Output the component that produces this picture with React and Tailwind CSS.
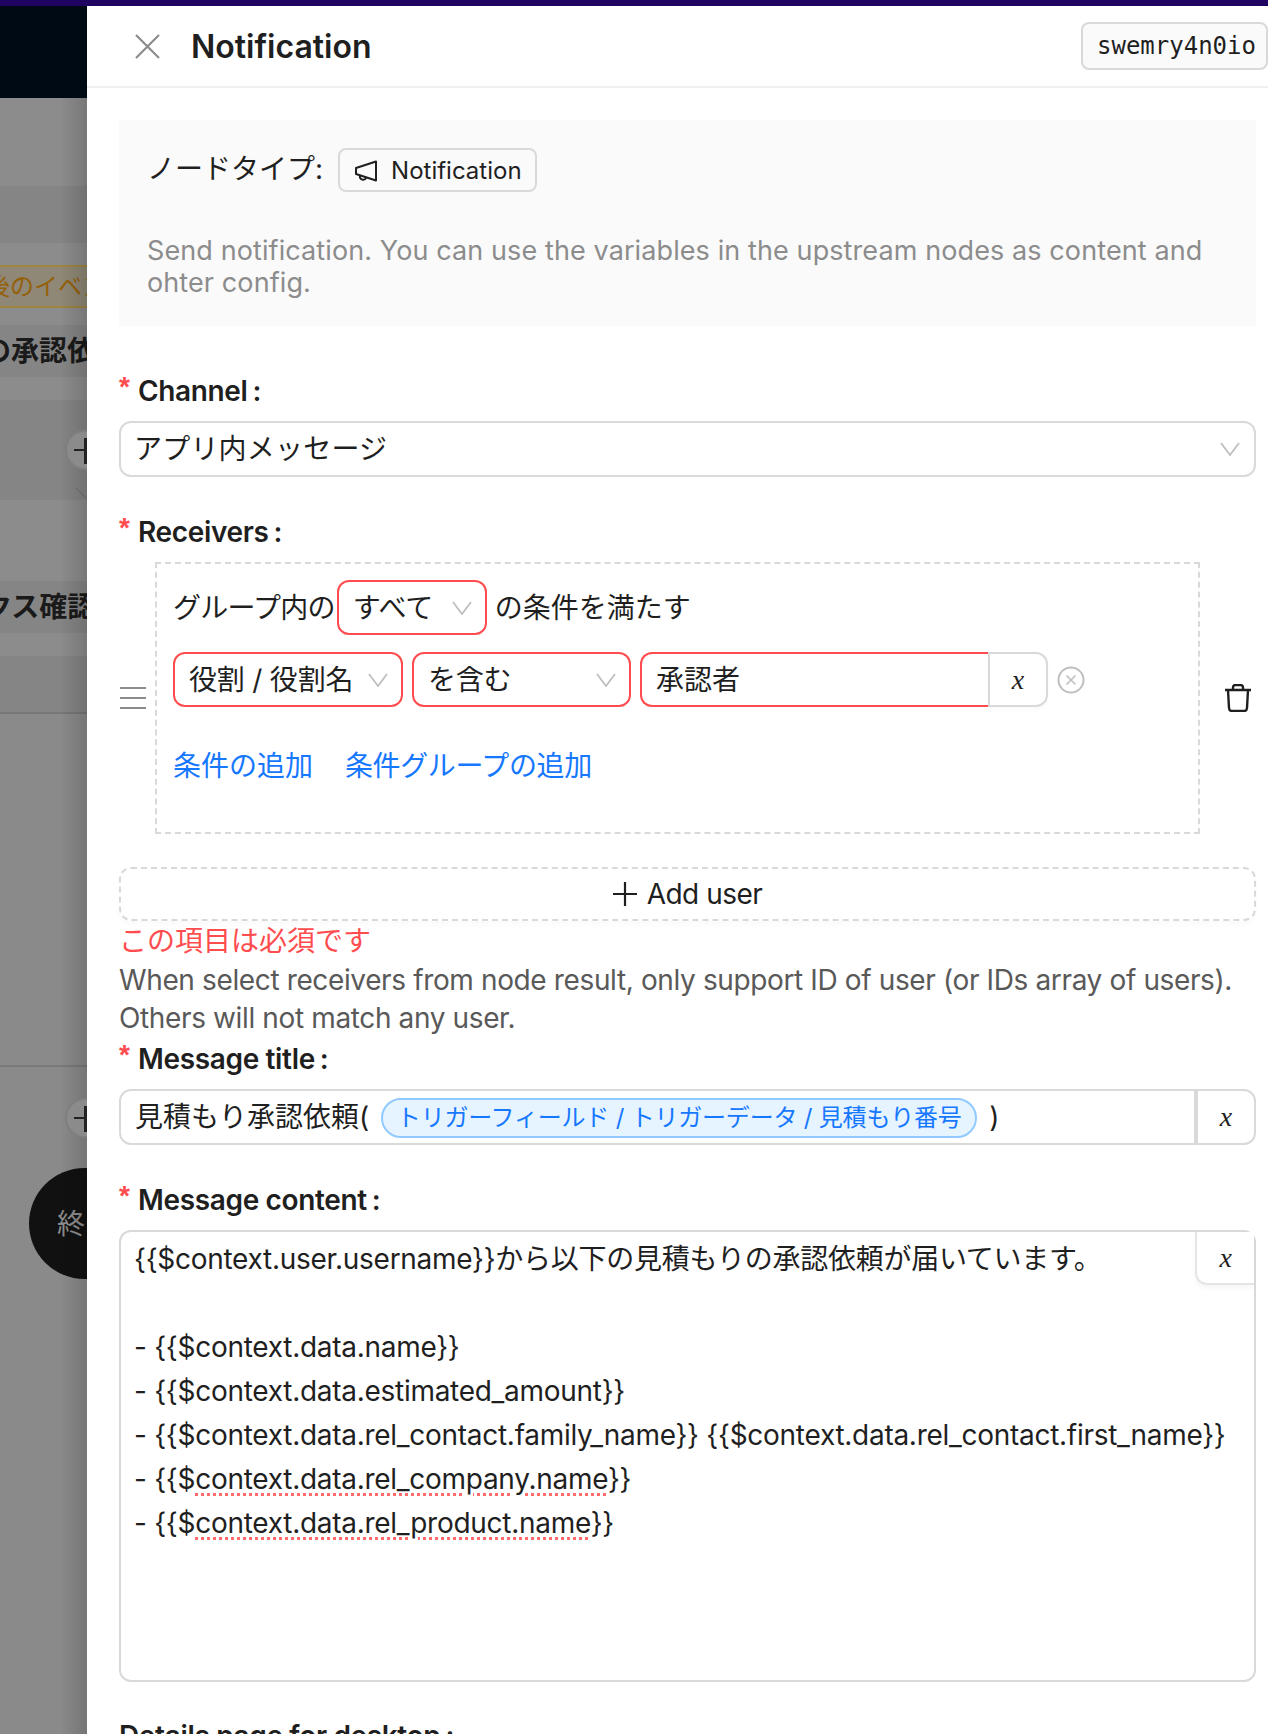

const Chevron = ({ className = "" }) => (
  <svg width="20" height="14" viewBox="0 0 20 14" fill="none" className={`shrink-0 ${className}`}>
    <path d="M1 1 L10 13 L19 1" stroke="#bfbfbf" strokeWidth="1.8" />
  </svg>
);

const XBtnLabel = () => (
  <span className="font-['Liberation_Serif',serif] italic text-[28px] leading-none text-[#1f1f1f]">x</span>
);

const Label = ({ children, required = true, className = "" }) => (
  <div className={`h-[44px] flex items-center font-semibold text-[#1f1f1f] ${className}`}>
    {required && (
      <span className="w-[19px] h-full text-[#ff4d4f] font-['Liberation_Sans',sans-serif] font-bold text-[28px] leading-[36px]">*</span>
    )}
    <span className="tracking-[-0.35px]">{children}</span>
    <span className="ml-[5px]">:</span>
  </div>
);

const RedSelect = ({ children, className = "" }) => (
  <div className={`h-[55px] border-2 border-[#ff4d4f] rounded-[12px] flex items-center justify-between pl-[14px] pr-[13px] bg-white ${className}`}>
    <span className="whitespace-nowrap tracking-[-0.2px]">{children}</span>
    <Chevron />
  </div>
);

const PlusCircle = ({ className = "" }) => (
  <div className={`absolute z-10 left-[65px] w-[40px] h-[40px] rounded-full border-2 border-[#7f7f7f] bg-[#8b8b8b] ${className}`}>
    <div className="absolute left-[7px] top-[17px] w-[26px] h-[2px] bg-[#222]" />
    <div className="absolute left-[17px] top-[6px] w-[3px] h-[26px] bg-[#222]" />
  </div>
);

const Underlined = ({ children }) => (
  <span className="underline decoration-dotted decoration-[#ff6b6b] decoration-[3px] underline-offset-[4px]">{children}</span>
);

function Canvas() {
  return (
    <div className="relative w-[87px] h-[1728px] shrink-0 overflow-hidden bg-[#8a8a8a] text-[28px] font-bold text-[#1a1a1a]">
      <div className="h-[92px] bg-[#000a14]" />
      <div className="h-[88px] bg-[#8c8c8c]" />
      <div className="h-[57px] bg-[#858585]" />
      <div className="h-[22px] bg-[#8c8c8c]" />
      <div className="h-[43px] border-y-2 border-[#a0853f] bg-[#8f8876] flex items-center font-normal text-[24px] text-[#95600a] whitespace-nowrap -ml-[14px]">後のイベント</div>
      <div className="h-[17px] bg-[#8c8c8c]" />
      <div className="h-[52px] bg-[#858585] flex items-center whitespace-nowrap -ml-[17px]">の承認依頼</div>
      <div className="h-[23px] bg-[#8c8c8c]" />
      <div className="h-[100px] bg-[#858585]" />
      <div className="h-[81px] bg-[#8c8c8c]" />
      <div className="h-[52px] bg-[#858585] flex items-center whitespace-nowrap -ml-[16px]">クス確認</div>
      <div className="h-[23px] bg-[#8c8c8c]" />
      <div className="h-[58px] bg-[#858585] border-b-2 border-[#777]" />
      <div className="h-[353px] border-b-2 border-[#7a7a7a]" />

      <PlusCircle className="top-[424px]" />
      <PlusCircle className="top-[1092px]" />
      <svg className="absolute left-[74px] top-[480px]" width="14" height="14" viewBox="0 0 14 14" fill="none">
        <path d="M2 2 L13 13" stroke="#777" strokeWidth="1.5" />
      </svg>
      <div className="absolute left-[29px] top-[1162px] w-[111px] h-[111px] rounded-full bg-[#111] flex items-center pl-[28px] font-normal text-[#8c8c8c]">終</div>

      <div className="absolute left-[60px] top-[92px] w-[27px] bottom-0 bg-gradient-to-r from-transparent to-black/15" />
    </div>
  );
}

export default function App() {
  return (
    <div className="w-[1268px] h-[1734px] overflow-hidden flex flex-col bg-white font-['Inter','Noto_Sans_CJK_JP',sans-serif] text-[28px] leading-[44px] text-[#1f1f1f]">
      <div className="h-[6px] bg-[#1f0561]" />
      <div className="flex flex-1 min-h-0">
        <Canvas />
        <div className="flex-1 min-w-0 flex flex-col">
          {/* header */}
          <div className="h-[82px] shrink-0 border-b-2 border-[#f0f0f0] flex items-center pl-[48px]">
            <svg width="25" height="25" viewBox="0 0 25 25" fill="none" className="shrink-0">
              <path d="M1 1 L24 24 M24 1 L1 24" stroke="#8c8c8c" strokeWidth="2.2" />
            </svg>
            <div className="ml-[31px] mt-[2px] text-[32px] font-semibold leading-none">Notification</div>
            <div className="ml-auto w-[187px] h-[48px] shrink-0 bg-[#fafafa] border-2 border-[#d9d9d9] rounded-[8px] pl-[14px] flex items-center font-['DejaVu_Sans_Mono',monospace] text-[24px] leading-none">
              swemry4n0io
            </div>
          </div>

          {/* body */}
          <div className="flex-1 min-h-0 overflow-hidden pl-[32px] pr-[12px] pt-[32px]">
            <div className="h-[206px] bg-[#fafafa] pl-[28px] pr-[28px] pt-[28px]">
              <div className="flex items-center h-[44px]">
                <span className="whitespace-nowrap -mt-[3px]">ノードタイプ:</span>
                <div className="ml-[15px] h-[44px] w-[199px] border-2 border-[#d9d9d9] rounded-[8px] flex items-center pl-[14px] pt-[1px] text-[24px] leading-none text-[#1f1f1f]">
                  <svg width="24" height="22" viewBox="0 0 24 22" fill="none" className="shrink-0">
                    <path d="M22 1.5 V20.5 L2 14 V8 Z" stroke="#1f1f1f" strokeWidth="2" strokeLinejoin="round" />
                    <path d="M6 15.5 A3.2 3.2 0 0 0 12.2 17.5" stroke="#1f1f1f" strokeWidth="2" />
                  </svg>
                  <span className="ml-[13px]">Notification</span>
                </div>
              </div>
              <p className="mt-[43px] text-[27px] tracking-[0.1px] leading-[32px] text-[#8c8c8c] whitespace-nowrap">
                Send notification. You can use the variables in the upstream nodes as content and<br />ohter config.
              </p>
            </div>

            <Label className="mt-[43px]">Channel</Label>
            <div className="mt-[8px] h-[56px] border-2 border-[#d9d9d9] rounded-[12px] flex items-center justify-between pl-[13px] pr-[14px]">
              <span className="tracking-[0.2px]">アプリ内メッセージ</span>
              <Chevron />
            </div>

            <Label className="mt-[33px]">Receivers</Label>
            <div className="mt-[8px] flex items-center">
              <div className="ml-[1px] w-[35px] shrink-0 flex flex-col gap-[8px]">
                <div className="w-[26px] h-[2px] bg-[#8c8c8c]" />
                <div className="w-[26px] h-[2px] bg-[#8c8c8c]" />
                <div className="w-[26px] h-[2px] bg-[#8c8c8c]" />
              </div>
              <div className="w-[1045px] h-[272px] shrink-0 border-2 border-dashed border-[#d9d9d9] pl-[16px] pt-[16px]">
                <div className="flex items-center h-[55px]">
                  <span className="whitespace-nowrap tracking-[-0.78px]">グループ内の</span>
                  <RedSelect className="ml-[2px] w-[150px]">すべて</RedSelect>
                  <span className="ml-[8px] whitespace-nowrap">の条件を満たす</span>
                </div>
                <div className="mt-[17px] flex items-center h-[55px]">
                  <RedSelect className="w-[230px]">役割 / 役割名</RedSelect>
                  <RedSelect className="ml-[9px] w-[219px]">を含む</RedSelect>
                  <div className="ml-[9px] w-[348px] h-[55px] border-2 border-r-0 border-[#ff4d4f] rounded-l-[12px] flex items-center pl-[14px]">承認者</div>
                  <div className="w-[60px] h-[55px] border-2 border-[#d9d9d9] rounded-r-[12px] flex items-center justify-center shadow-[0_4px_4px_rgba(0,0,0,0.02)]">
                    <XBtnLabel />
                  </div>
                  <svg width="28" height="28" viewBox="0 0 28 28" fill="none" className="ml-[9px] shrink-0">
                    <circle cx="14" cy="14" r="12.5" stroke="#bfbfbf" strokeWidth="2" />
                    <path d="M9.5 9.5 L18.5 18.5 M18.5 9.5 L9.5 18.5" stroke="#bfbfbf" strokeWidth="1.6" />
                  </svg>
                </div>
                <div className="mt-[37px] flex text-[#1677ff]">
                  <span>条件の追加</span>
                  <span className="ml-[32px] tracking-[-0.4px]">条件グループの追加</span>
                </div>
              </div>
              <svg width="28" height="28" viewBox="0 0 28 28" fill="none" className="ml-[24px] shrink-0">
                <path d="M1 6 H27 M9 6 V3.5 Q9 1 11.5 1 H16.5 Q19 1 19 3.5 V6 M4 6 L5 24 Q5.2 27 8 27 H20 Q22.8 27 23 24 L24 6" stroke="#1f1f1f" strokeWidth="2.4" strokeLinejoin="round" />
              </svg>
            </div>

            <div className="mt-[33px] h-[54px] border-2 border-dashed border-[#d9d9d9] rounded-[12px] flex items-center justify-center shadow-[0_4px_4px_rgba(0,0,0,0.02)]">
              <svg width="24" height="24" viewBox="0 0 24 24" fill="none">
                <path d="M12 0 V24 M0 12 H24" stroke="#1f1f1f" strokeWidth="2.2" />
              </svg>
              <span className="ml-[10px] tracking-[-0.5px]">Add user</span>
            </div>
            <div className="h-[38px] leading-[40px] text-[#ff4d4f]">この項目は必須です</div>
            <div className="mt-[2px] leading-[38px] text-[#595959] tracking-[-0.37px] whitespace-nowrap">
              When select receivers from node result, only support ID of user (or IDs array of users).<br />Others will not match any user.
            </div>

            <Label>Message title</Label>
            <div className="mt-[8px] h-[56px] border-2 border-[#d9d9d9] rounded-[12px] flex items-center pl-[14px] overflow-hidden">
              <span className="whitespace-nowrap">見積もり承認依頼(</span>
              <span className="ml-[12px] mt-[1px] h-[40px] w-[596px] shrink-0 rounded-full bg-[#e6f4ff] border-2 border-[#91caff] text-[#1677ff] text-[24px] leading-none tracking-[-0.2px] flex items-center justify-center whitespace-nowrap">
                トリガーフィールド / トリガーデータ / 見積もり番号
              </span>
              <span className="ml-[12px]">)</span>
              <div className="ml-auto w-[60px] h-full shrink-0 border-l-4 border-[#d9d9d9] flex items-center justify-center">
                <XBtnLabel />
              </div>
            </div>

            <Label className="mt-[33px]">Message content</Label>
            <div className="relative mt-[8px] h-[452px] border-2 border-[#d9d9d9] rounded-[12px] pl-[13px] pr-[20px] pt-[5px] whitespace-nowrap tracking-[-0.28px]">
              <div>{"{{$context.user.username}}から以下の見積もりの承認依頼が届いています。"}</div>
              <div className="h-[44px]" />
              <div>{"- {{$context.data.name}}"}</div>
              <div>{"- {{$context.data.estimated_amount}}"}</div>
              <div>{"- {{$context.data.rel_contact.family_name}} {{$context.data.rel_contact.first_name}}"}</div>
              <div>{"- {{$"}<Underlined>context.data.rel_company.name</Underlined>{"}}"}</div>
              <div>{"- {{$"}<Underlined>context.data.rel_product.name</Underlined>{"}}"}</div>
              <div className="absolute right-0 top-0 w-[59px] h-[53px] bg-white border-2 border-t-0 border-r-0 border-[#e5e5e5] rounded-bl-[12px] flex items-center justify-center shadow-[0_4px_4px_rgba(0,0,0,0.03)]">
                <XBtnLabel />
              </div>
            </div>

            <Label required={false} className="mt-[32px]">Details page for desktop</Label>
          </div>
        </div>
      </div>
    </div>
  );
}
